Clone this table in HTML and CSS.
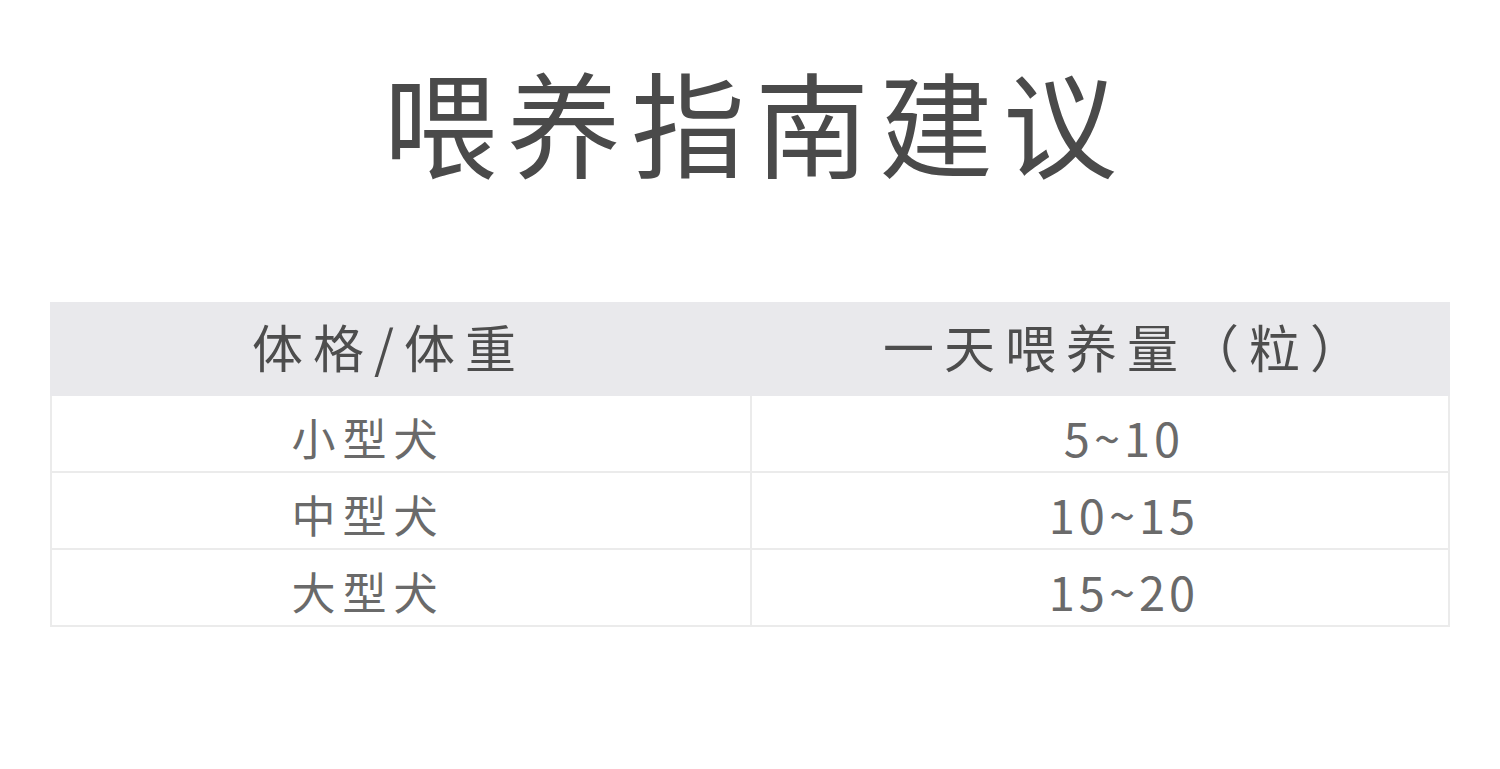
FILE: index.html
```html
<!DOCTYPE html>
<html lang="zh">
<head>
<meta charset="utf-8">
<link rel="stylesheet" href="styles.css">
</head>
<body>
<main class="page">
  <h1 class="title">喂养指南建议</h1>
  <section class="table">
    <div class="row head">
      <div class="cell c1">体格/体重</div>
      <div class="cell c2">一天喂养量（粒）</div>
    </div>
    <div class="row">
      <div class="cell c1">小型犬</div>
      <div class="cell c2 num">5~10</div>
    </div>
    <div class="row">
      <div class="cell c1">中型犬</div>
      <div class="cell c2 num">10~15</div>
    </div>
    <div class="row">
      <div class="cell c1">大型犬</div>
      <div class="cell c2 num">15~20</div>
    </div>
  </section>
</main>
</body>
</html>
```
FILE: styles.css
```css
html, body {
  margin: 0;
  padding: 0;
  background: #ffffff;
}
body {
  font-family: "Noto Sans CJK SC", "Noto Sans", sans-serif;
  width: 1500px;
  height: 769px;
  overflow: hidden;
}
.page {
  display: flex;
  flex-direction: column;
  align-items: center;
}
.title {
  margin: 50px 0 0 10px;
  height: 140px;
  font-size: 114px;
  font-weight: 400;
  line-height: 140px;
  letter-spacing: 10px;
  color: #4a4a4a;
}
.table {
  width: 1400px;
  align-self: flex-start;
  margin-left: 50px;
  margin-top: 112px;
  display: flex;
  flex-direction: column;
}
.row {
  display: grid;
  grid-template-columns: 700px 700px;
  height: 77px;
  border-left: 2px solid #ebebeb;
  border-right: 2px solid #ebebeb;
  border-bottom: 2px solid #ebebeb;
  box-sizing: border-box;
  overflow: hidden;
}
.row.head {
  height: 94px;
  border: none;
  background: #e9e9ec;
}
.cell {
  display: flex;
  align-items: center;
  justify-content: center;
  font-size: 44px;
  line-height: 1.2;
  letter-spacing: 7px;
  color: #6a6a6a;
  padding-top: 8px;
  box-sizing: border-box;
  height: 100%;
}
.row .c1 {
  border-right: 2px solid #ebebeb;
  padding-right: 66px;
}
.row .c2 {
  padding-left: 44px;
}
.row.head .cell {
  padding-top: 0;
  padding-bottom: 4px;
  font-size: 51px;
  color: #4d4d4d;
  letter-spacing: 10px;
}
.row.head .c1 {
  border-right: none;
  padding-right: 22px;
}
.row.head .c2 {
  padding-left: 54px;
}
.num {
  font-size: 47px;
  letter-spacing: 4px;
}
```
